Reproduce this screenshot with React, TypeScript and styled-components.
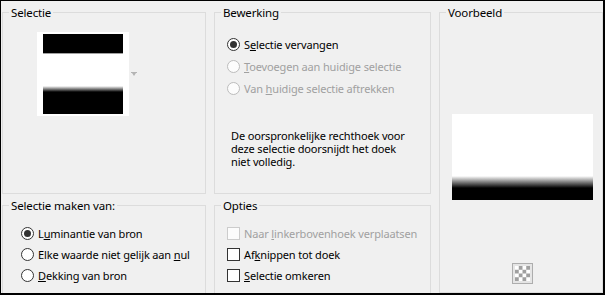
import React from 'react';
import styled, { createGlobalStyle } from 'styled-components';

const Global = createGlobalStyle`
  html, body { margin: 0; padding: 0; background: #f0f0f0; }
  body { font-family: "Noto Sans", sans-serif; font-size: 11px; letter-spacing: -0.15px; color: #000; }
  * { box-sizing: border-box; }
`;

const Window = styled.div`
  width: 605px;
  height: 295px;
  background: #f0f0f0;
  border-style: solid;
  border-color: #000;
  border-width: 1px 2px 2px 1px;
  overflow: hidden;
  display: grid;
  grid-template-columns: 204px 217px 1fr;
  grid-template-rows: 189px 1fr;
  column-gap: 8px;
  row-gap: 4px;
  padding: 4px 0 0 1px;
`;

const Group = styled.fieldset<{ $open?: boolean; $col: number; $row: string }>`
  margin: 0;
  padding: 0;
  min-width: 0;
  border: 1px solid #dcdcdc;
  ${(p) => (p.$open ? 'border-bottom: none;' : '')}
  grid-column: ${(p) => p.$col};
  grid-row: ${(p) => p.$row};
  display: flex;
  flex-direction: column;
`;

const Legend = styled.legend`
  margin-left: 6px;
  padding: 0 2px;
  font-size: 11.5px;
  line-height: 15px;
`;

const Body = styled.div<{ $pt: number; $pl: number }>`
  padding-top: ${(p) => p.$pt}px;
  padding-left: ${(p) => p.$pl}px;
  display: flex;
  flex-direction: column;
`;

const SourceRow = styled.div`
  display: flex;
  align-items: center;
  gap: 2px;
`;

const SourceFrame = styled.div`
  width: 92px;
  height: 84px;
  background: #fff;
  padding: 2px 6px;
`;

const SourceImage = styled.div`
  width: 80px;
  height: 80px;
  background: linear-gradient(
    to bottom,
    #000 0px,
    #000 19px,
    #a0a0a0 19px,
    #a0a0a0 20px,
    #fff 20px,
    #fff 52px,
    #000 58px,
    #000 100%
  );
`;

const Arrow = styled.svg`
  width: 6px;
  height: 4px;
  display: block;
`;

const OptionList = styled.div`
  display: flex;
  flex-direction: column;
`;

const Option = styled.label<{ $disabled?: boolean; $h: number }>`
  display: flex;
  align-items: center;
  gap: 4px;
  height: ${(p) => p.$h}px;
  color: ${(p) => (p.$disabled ? '#a0a0a0' : '#000')};
  white-space: nowrap;
`;

const RadioMark = styled.span<{ $checked?: boolean; $disabled?: boolean }>`
  width: 13px;
  height: 13px;
  flex: none;
  border-radius: 50%;
  border: 1px solid ${(p) => (p.$disabled ? '#bcbcbc' : '#333')};
  background: ${(p) => (p.$disabled ? '#fcfcfc' : '#fff')};
  display: flex;
  align-items: center;
  justify-content: center;
  &::after {
    content: '';
    width: 7px;
    height: 7px;
    border-radius: 50%;
    background: #333;
    display: ${(p) => (p.$checked ? 'block' : 'none')};
  }
`;

const CheckMark = styled.span<{ $disabled?: boolean }>`
  width: 13px;
  height: 13px;
  flex: none;
  border: 1px solid ${(p) => (p.$disabled ? '#cccccc' : '#333')};
  background: ${(p) => (p.$disabled ? '#fcfcfc' : '#fff')};
`;

const U = styled.span`
  text-decoration: underline;
`;

const Note = styled.p`
  margin: 30px 0 0 4px;
  line-height: 13px;
  white-space: nowrap;
`;

const PreviewImage = styled.div`
  width: 141px;
  height: 86px;
  background: linear-gradient(to bottom, #fff 0px, #fff 62px, #000 74px, #000 100%);
`;

const PreviewFooter = styled.div`
  width: 141px;
  margin-top: 63px;
  display: flex;
  justify-content: center;
`;

const CheckerButton = styled.div`
  width: 21px;
  height: 21px;
  border: 1px solid #adadad;
  background: #e5e5e5;
  padding: 2px;
`;

const Checker = styled.div`
  width: 15px;
  height: 15px;
  background-color: #fff;
  background-image: conic-gradient(#a0a0a0 25%, #fff 25% 50%, #a0a0a0 50% 75%, #fff 75%);
  background-size: 7.5px 7.5px;
`;

const Radio = ({
  label,
  checked,
  disabled,
  h,
}: {
  label: React.ReactNode;
  checked?: boolean;
  disabled?: boolean;
  h: number;
}) => (
  <Option $disabled={disabled} $h={h}>
    <RadioMark $checked={checked} $disabled={disabled} />
    <span>{label}</span>
  </Option>
);

const Check = ({ label, disabled, h }: { label: React.ReactNode; disabled?: boolean; h: number }) => (
  <Option $disabled={disabled} $h={h}>
    <CheckMark $disabled={disabled} />
    <span>{label}</span>
  </Option>
);

export default function App() {
  return (
    <>
      <Global />
      <Window>
        <Group $col={1} $row="1">
          <Legend>Selectie</Legend>
          <Body $pt={12} $pl={34}>
            <SourceRow>
              <SourceFrame>
                <SourceImage />
              </SourceFrame>
              <Arrow viewBox="0 0 6 4">
                <rect x="0" y="0" width="6" height="1" fill="#b4b4b4" />
                <polygon points="1,1 5,1 3,4" fill="#b4b4b4" />
              </Arrow>
            </SourceRow>
          </Body>
        </Group>

        <Group $col={2} $row="1">
          <Legend>Bewerking</Legend>
          <Body $pt={13} $pl={12}>
            <OptionList>
              <Radio h={22} checked label={<>S<U>e</U>lectie vervangen</>} />
              <Radio h={22} disabled label={<><U>T</U>oevoegen aan huidige selectie</>} />
              <Radio h={22} disabled label={<>Van <U>h</U>uidige selectie aftrekken</>} />
            </OptionList>
            <Note>
              De oorspronkelijke rechthoek voor
              <br />
              deze selectie doorsnijdt het doek
              <br />
              niet volledig.
            </Note>
          </Body>
        </Group>

        <Group $col={3} $row="1 / span 2">
          <Legend>Voorbeeld</Legend>
          <Body $pt={94} $pl={12}>
            <PreviewImage />
            <PreviewFooter>
              <CheckerButton>
                <Checker />
              </CheckerButton>
            </PreviewFooter>
          </Body>
        </Group>

        <Group $open $col={1} $row="2">
          <Legend>Selectie maken van:</Legend>
          <Body $pt={10} $pl={18}>
            <OptionList>
              <Radio h={21} checked label={<>L<U>u</U>minantie van bron</>} />
              <Radio h={21} label={<>Elke waarde niet gelijk aan <U>n</U>ul</>} />
              <Radio h={21} label={<><U>D</U>ekking van bron</>} />
            </OptionList>
          </Body>
        </Group>

        <Group $open $col={2} $row="2">
          <Legend>Opties</Legend>
          <Body $pt={10} $pl={12}>
            <OptionList>
              <Check h={21} disabled label={<>Naar <U>l</U>inkerbovenhoek verplaatsen</>} />
              <Check h={21} label={<>Af<U>k</U>nippen tot doek</>} />
              <Check h={21} label={<><U>S</U>electie omkeren</>} />
            </OptionList>
          </Body>
        </Group>
      </Window>
    </>
  );
}
